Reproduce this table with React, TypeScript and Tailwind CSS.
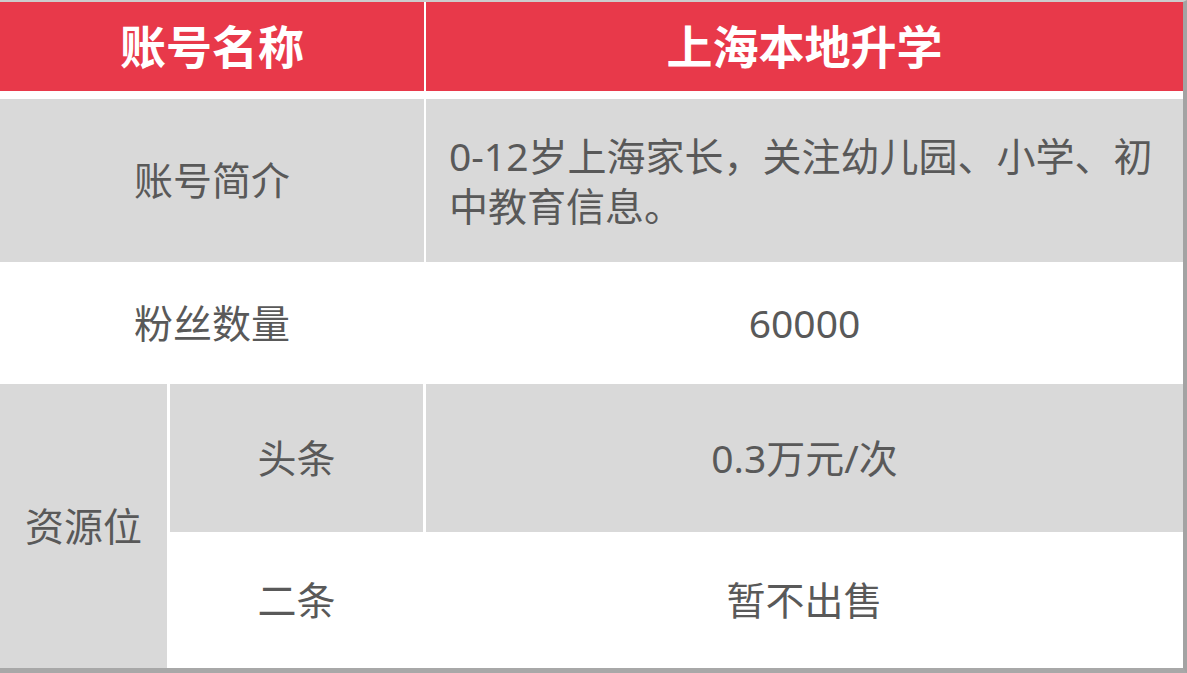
import React from "react"

const font = {
  fontFamily: '"Noto Sans", "Noto Sans CJK SC", "Microsoft YaHei", sans-serif',
}

function Cell({
  children,
  className = "",
}: {
  children?: React.ReactNode
  className?: string
}) {
  return (
    <div className={"flex items-center justify-center text-[39px] text-[#595959] " + className}>
      {children}
    </div>
  )
}

export default function App() {
  return (
    <div
      className="h-[673px] w-[1187px] overflow-hidden bg-white border-t-2 border-t-[#cccccc] border-r-4 border-r-[#a3a3a3] border-b-[5px] border-b-[#a8a8a8]"
      style={font}
    >
      <div className="flex h-full flex-col bg-white">
        {/* header */}
        <div className="flex h-[89px] gap-[2px]">
          <div className="flex w-[424px] items-center justify-center bg-[#e8394a] text-[46px] font-bold text-white">
            账号名称
          </div>
          <div className="flex flex-1 items-center justify-center bg-[#e8394a] text-[46px] font-bold text-white">
            上海本地升学
          </div>
        </div>

        {/* intro */}
        <div className="mt-[8px] flex h-[163px] gap-[2px]">
          <Cell className="w-[424px] bg-[#d9d9d9]">账号简介</Cell>
          <div className="flex flex-1 items-center bg-[#d9d9d9] pl-[23px] text-[39px] leading-[50px] text-[#595959]">
            <p>
              0-12岁上海家长，关注幼儿园、小学、初
              <br />
              中教育信息。
            </p>
          </div>
        </div>

        {/* fans */}
        <div className="flex h-[122px] gap-[2px]">
          <Cell className="w-[424px]">粉丝数量</Cell>
          <Cell className="flex-1">60000</Cell>
        </div>

        {/* resources */}
        <div className="flex flex-1 gap-[3px]">
          <Cell className="w-[167px] bg-[#d9d9d9]">资源位</Cell>
          <div className="flex flex-1 flex-col">
            <div className="flex h-[148px] gap-[3px]">
              <Cell className="w-[253px] bg-[#d9d9d9]">头条</Cell>
              <Cell className="flex-1 bg-[#d9d9d9]">0.3万元/次</Cell>
            </div>
            <div className="flex flex-1 gap-[3px]">
              <Cell className="w-[253px]">二条</Cell>
              <Cell className="flex-1">暂不出售</Cell>
            </div>
          </div>
        </div>
      </div>
    </div>
  )
}
